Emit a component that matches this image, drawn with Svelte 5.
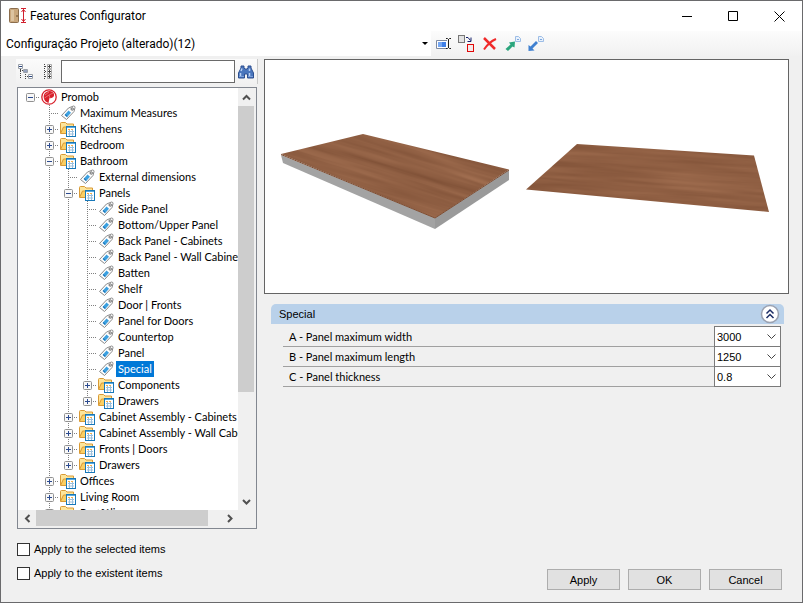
<script lang="ts">
    type TreeNode = {
        name: string;
        open?: boolean;
        children?: TreeNode[];
    };
    type Row = { node: TreeNode; guides: boolean[]; last: boolean };

    let tree: TreeNode = $state({
        name: 'Promob',
        open: true,
        children: [
            { name: 'Maximum Measures' },
            { name: 'Kitchens', children: [] },
            { name: 'Bedroom', children: [] },
            {
                name: 'Bathroom',
                open: true,
                children: [
                    { name: 'External dimensions' },
                    {
                        name: 'Panels',
                        open: true,
                        children: [
                            { name: 'Side Panel' },
                            { name: 'Bottom/Upper Panel' },
                            { name: 'Back Panel - Cabinets' },
                            { name: 'Back Panel - Wall Cabinets' },
                            { name: 'Batten' },
                            { name: 'Shelf' },
                            { name: 'Door | Fronts' },
                            { name: 'Panel for Doors' },
                            { name: 'Countertop' },
                            { name: 'Panel' },
                            { name: 'Special' },
                            { name: 'Components', children: [] },
                            { name: 'Drawers', children: [] },
                        ],
                    },
                    { name: 'Cabinet Assembly - Cabinets', children: [] },
                    { name: 'Cabinet Assembly - Wall Cabinets', children: [] },
                    { name: 'Fronts | Doors', children: [] },
                    { name: 'Drawers', children: [] },
                ],
            },
            { name: 'Offices', children: [] },
            { name: 'Living Room', children: [] },
            { name: 'Portfólio', children: [] },
        ],
    });

    let selected = $state('Special');

    let fields = $state([
        { id: 'width', label: 'A - Panel maximum width', value: '3000' },
        { id: 'length', label: 'B - Panel maximum length', value: '1250' },
        { id: 'thickness', label: 'C - Panel thickness', value: '0.8' },
    ]);

    // guides: for each ancestor, does its line run on past this row
    function flatten(node: TreeNode, guides: boolean[], last: boolean): Row[] {
        const rows: Row[] = [{ node, guides, last }];
        if (node.open && node.children) {
            const kids = node.children;
            kids.forEach((child, i) => {
                rows.push(...flatten(child, [...guides, !last], i === kids.length - 1 && guides.length > 0));
            });
        }
        return rows;
    }

    // the root has no line of its own
    let rows = $derived(flatten(tree, [], true));
</script>

{#snippet tagIcon()}
    <svg class="node-icon" width="18" height="16" viewBox="0 0 18 16">
        <path d="M2.500 10.500 9.500 3l5-2q1.600 0 1.500 1.600L15 6.500 7.500 14.500z" fill="#fdfdfd" stroke="#8a8a8a" />
        <path d="m5.500 10 4-4.500 2.500 2.300-4 4.500z" fill="#3ba0e0" />
        <path d="m6 9.500 2.200 2" stroke="#1763a5" />
        <circle cx="13.200" cy="4" r="1.200" fill="#fff" stroke="#666" />
    </svg>
{/snippet}

{#snippet folderIcon()}
    <svg class="node-icon" width="18" height="16" viewBox="0 0 18 16">
        <path d="M1.500 12V2.500q0-1 1-1h4l1.500 1.500h6.500v3" fill="#fde59b" stroke="#d99a35" />
        <path d="M1.500 12.500 4.500 6H15v6.500z" fill="#fbcf63" stroke="#d99a35" />
        <rect x="7.500" y="5.500" width="9" height="10" fill="#fff" stroke="#1878b9" />
        <path d="M8 6.500h8" stroke="#5aa9dc" />
        <path d="M9 8.500h6" stroke="#f5b04a" stroke-dasharray="2 1" />
        <path d="M9 10.500h6M9 13h6M10.500 9v6M13.500 9v6" stroke="#9cc0dd" />
    </svg>
{/snippet}

{#snippet promobIcon()}
    <svg class="node-icon" width="18" height="16" viewBox="0 0 18 16">
        <circle cx="9" cy="8" r="7.200" fill="#fff" stroke="#d8212c" stroke-width="1.300" />
        <path d="M8.500 14C3.500 12.500 2.500 7 5 4q4-3.500 8-.8 2 2.500.3 4.800-1.600 1.600-3.800 1z" fill="#d8212c" />
        <path d="m5 6 4-3M4.500 9 9 6l4-2M9 6l1 3" stroke="#f08a8f" stroke-width=".7" fill="none" />
    </svg>
{/snippet}

{#snippet chevron(d: string)}
    <svg width="9" height="9" viewBox="0 0 9 9">
        <path {d} fill="none" stroke="#505050" stroke-width="2" />
    </svg>
{/snippet}

<main class="window">
    <header class="title-bar">
        <svg width="18" height="18" viewBox="0 0 18 18">
            <rect x=".5" y="1.500" width="9" height="14" rx="1" fill="#c9a77c" stroke="#8b6d4c" />
            <path d="M2 3h3v11H2z" fill="#dcc3a0" />
            <circle cx="8" cy="9" r=".8" fill="#50391f" />
            <path d="M12 1.500h5M12 15.500h5M14.500 2v13M12.500 5l2-2.500 2 2.500M12.500 12l2 2.500 2-2.500" fill="none" stroke="#d11f2d" />
        </svg>
        <h1>Features Configurator</h1>
        <button class="window-button" aria-label="Minimize">
            <svg width="11" height="11" viewBox="0 0 11 11"><path d="M0 5.500h10" stroke="#000" /></svg>
        </button>
        <button class="window-button" aria-label="Maximize">
            <svg width="11" height="11" viewBox="0 0 11 11"><path d="M.5.5h9v9h-9z" fill="none" stroke="#000" /></svg>
        </button>
        <button class="window-button" aria-label="Close">
            <svg width="11" height="11" viewBox="0 0 11 11"><path d="m.5.5 10 10m0-10-10 10" stroke="#000" /></svg>
        </button>
    </header>

    <div class="toolbar">
        <div class="project">
            <select aria-label="Project">
                <option>Configuração Projeto (alterado)(12)</option>
            </select>
            <span class="arrow"></span>
        </div>
        <button class="tool" aria-label="Rename">
            <svg width="16" height="16" viewBox="0 0 16 16">
                <path d="M11 4.500H.5v8H11" fill="#fff" stroke="#7e8aa0" />
                <path d="M2 6h8v5H2z" fill="#3f80e8" />
                <path d="M2 6h4v5H2z" fill="#75a7f3" />
                <path d="M10 2.500h1.500l1 1 1-1H15M12.500 3v9M10 12.500h1.500l1-1 1 1H15" fill="none" stroke="#222" />
            </svg>
        </button>
        <button class="tool" aria-label="Replace">
            <svg width="17" height="17" viewBox="0 0 17 17">
                <rect x=".5" y=".5" width="6" height="7" fill="#e3e3e3" stroke="#777" />
                <rect x="9.500" y="9.500" width="6" height="7" fill="#f4eaea" stroke="#e00808" />
                <path d="M8 2.500h2l2.500 3M13 2.500v4H9.500" fill="none" stroke="#14206b" />
            </svg>
        </button>
        <button class="tool" aria-label="Delete">
            <svg width="16" height="16" viewBox="0 0 16 16">
                <path d="m2 2 11 11" stroke="#f02a2a" stroke-width="2.500" />
                <path d="M14 3Q7 6 2 13.500" fill="none" stroke="#f02a2a" stroke-width="2" />
            </svg>
        </button>
        <button class="tool" aria-label="Export">
            <svg width="16" height="16" viewBox="0 0 16 16">
                <path d="M.5 13 5.500 8.500 4 6.500l6-1L9.500 11.500 7.500 10.500 3 15z" fill="#2aa57c" />
                <path d="M10.500.5h3l2 2v3h-5z" fill="#e8f1fc" stroke="#9dbde6" />
                <path d="M12 3.500h2" stroke="#7da7dc" />
            </svg>
        </button>
        <button class="tool" aria-label="Import">
            <svg width="16" height="16" viewBox="0 0 16 16">
                <path d="M.5 15V9L2.500 10.500 8 5l2 2-5.500 5.500L6.500 14.500z" fill="#3f80d0" />
                <path d="M10.500.5h3l2 2v3h-5z" fill="#e8f1fc" stroke="#9dbde6" />
                <path d="M12 3.500h2" stroke="#7da7dc" />
            </svg>
        </button>
    </div>

    <div class="content">
        <aside>
            <div class="search">
                <button class="expand-all" aria-label="Expand all">
                    <svg width="15" height="16" viewBox="0 0 15 16">
                        <path d="M2.500 5v10M7.500 10v5M2 6.500h4M7 12.500h3" stroke="#444" stroke-dasharray="1 1" />
                        <path d="M.5.5h4v4h-4zM5.500 5.500h4v3h-4zM10.500 10.500h4v4h-4z" fill="#fff" stroke="#9aa0a8" />
                        <path d="M1 2.500h3M6 7h3M11 12.500h3" stroke="#2a4580" />
                    </svg>
                </button>
                <button class="collapse-all" aria-label="Collapse all">
                    <svg width="10" height="16" viewBox="0 0 10 16">
                        <path d="M1.500 0v16M2 2.500h3M2 7.500h3M2 12.500h3" stroke="#444" stroke-dasharray="1 1" />
                        <path d="M4.500.5h4v4h-4zM4.500 5.500h4v4h-4zM4.500 10.500h4v4h-4z" fill="#fff" stroke="#aaa" />
                        <path d="M5 2.500h3M5 7.500h3M5 12.500h3M6.500 1v3M6.500 6v3M6.500 11v3" stroke="#444" />
                    </svg>
                </button>
                <input type="text" aria-label="Search" />
                <button class="find" aria-label="Find">
                    <svg width="16" height="16" viewBox="0 0 16 16">
                        <path d="M3 2h3v2l1 1h2l1-1V2h3v2l2.500 5v5H9.500v-4h-3v4H.5V9L3 4z" fill="#4a76bd" stroke="#2c4f90" />
                        <path d="M2.500 9v4M4 4.500 3 7M11.500 9v4M11.500 4.500v2.500" stroke="#b9d0f3" stroke-width="1.500" />
                        <path d="M1 12.500h5M10 12.500h5" stroke="#7da1dc" />
                    </svg>
                </button>
            </div>

            <div class="tree-box">
                <ul class="tree">
                    {#each rows as { node, guides, last }, i}
                        <li>
                            {#each guides as line, level}
                                <svg class="guide" width="19" height="16">
                                    {#if line && level > 0}
                                        <path d="M9.500 0v16" stroke="#808080" stroke-dasharray="1 1" />
                                    {/if}
                                </svg>
                            {/each}
                            <span class="joint">
                                <svg class="guide" width="19" height="16">
                                    {#if i > 0}
                                        <path d={last ? 'M9.500 0v9' : 'M9.500 0v16'} stroke="#808080" stroke-dasharray="1 1" />
                                    {/if}
                                    <path d="M9 8.500h10" stroke="#808080" stroke-dasharray="1 1" />
                                </svg>
                                {#if node.children}
                                    <button
                                        class="expander"
                                        aria-label={node.open ? 'Collapse' : 'Expand'}
                                        onclick={() => (node.open = !node.open)}
                                    >
                                        <svg width="9" height="9" viewBox="0 0 9 9">
                                            <rect x=".5" y=".5" width="8" height="8" rx="1" fill="#f8f8f8" stroke="#919191" />
                                            <path d={node.open ? 'M2 4.500h5' : 'M2 4.500h5M4.500 2v5'} stroke="#2b4a8f" />
                                        </svg>
                                    </button>
                                {/if}
                            </span>
                            {#if i === 0}
                                {@render promobIcon()}
                            {:else if node.children}
                                {@render folderIcon()}
                            {:else}
                                {@render tagIcon()}
                            {/if}
                            <button
                                class="node-name"
                                class:selected={node.name === selected}
                                onclick={() => (selected = node.name)}
                            >
                                {node.name}
                            </button>
                        </li>
                    {/each}
                </ul>
                <div class="scroll vertical">
                    <button aria-label="Scroll up">{@render chevron('M1 6.500 4.500 3 8 6.500')}</button>
                    <span class="thumb"></span>
                    <button aria-label="Scroll down">{@render chevron('M1 3 4.500 6.500 8 3')}</button>
                </div>
                <div class="scroll horizontal">
                    <button aria-label="Scroll left">{@render chevron('M6.500 1 3 4.500 6.500 8')}</button>
                    <span class="thumb"></span>
                    <button aria-label="Scroll right">{@render chevron('M3 1 6.500 4.500 3 8')}</button>
                </div>
            </div>

            <label class="check"><input type="checkbox" />Apply to the selected items</label>
            <label class="check"><input type="checkbox" />Apply to the existent items</label>
        </aside>

        <section class="details">
            <div class="preview">
                <svg viewBox="0 0 523 233" role="img" aria-label="Panel preview">
                    <defs>
                        <filter id="grain" x="0" y="0" width="100%" height="100%" color-interpolation-filters="sRGB">
                            <feTurbulence type="fractalNoise" baseFrequency="0.008 0.16" numOctaves="3" seed="4" />
                            <feColorMatrix values="0.16 0 0 0 0.48  0.14 0 0 0 0.3  0.12 0 0 0 0.2  0 0 0 0 1" />
                        </filter>
                        <clipPath id="board"><path d="M16 94 98 74l146 35.500L170 158z" /></clipPath>
                        <clipPath id="sheet"><path d="M261 129.500 312 84l177 11.500L504 152z" /></clipPath>
                    </defs>
                    <path d="M16 95 170 158v11L18 103z" fill="#a3a3a3" />
                    <path d="M170 158 244 110v10l-74 49z" fill="#9a9a9a" />
                    <g clip-path="url(#board)">
                        <rect x="-20" y="-20" width="320" height="260" filter="url(#grain)" transform="rotate(17 130 110)" />
                    </g>
                    <path d="M16 94.500 170 158 244 110" fill="none" stroke="#7d4c31" />
                    <g clip-path="url(#sheet)">
                        <rect x="240" y="40" width="290" height="150" filter="url(#grain)" transform="rotate(4 380 115)" />
                    </g>
                </svg>
            </div>

            <div class="group">
                <h2>
                    Special
                    <button aria-label="Collapse group">
                        <svg width="20" height="20" viewBox="0 0 20 20">
                            <circle cx="10" cy="10" r="8.500" fill="#fff" stroke="#9aa1b0" stroke-width="1.500" />
                            <path d="m6.500 9.500 3.500-3.500 3.500 3.500M6.500 14l3.500-3.500 3.500 3.500" fill="none" stroke="#1c2d66" stroke-width="1.500" />
                        </svg>
                    </button>
                </h2>
                {#each fields as field}
                    <div class="field">
                        <label for={field.id}>{field.label}</label>
                        <div class="combo">
                            <select id={field.id} bind:value={field.value}>
                                <option>{field.value}</option>
                            </select>
                            <svg width="9" height="6" viewBox="0 0 9 6">
                                <path d="m.5.500 4 4 4-4" fill="none" stroke="#444" />
                            </svg>
                        </div>
                    </div>
                {/each}
            </div>

            <footer>
                <button>Apply</button>
                <button>OK</button>
                <button>Cancel</button>
            </footer>
        </section>
    </div>
</main>

<style>
    :global(body) {
        background: #fff;
    }

    * {
        box-sizing: border-box;
    }

    button,
    select,
    input {
        font: inherit;
        color: inherit;
    }

    button {
        display: flex;
        align-items: center;
        justify-content: center;
        padding: 0;
        border: none;
        background: none;
    }

    svg {
        display: block;
        flex: none;
    }

    select {
        appearance: none;
        border: none;
        border-radius: 0;
        background: #fff;
    }

    .window {
        display: flex;
        flex-direction: column;
        height: calc(100vh - 10px);
        margin-right: 6px;
        border: 1px solid #6a6a6c;
        background: #f0f0f0;
        color: #000;
        font: 11px/16px "Liberation Sans", Arial, sans-serif;
    }

    .title-bar {
        display: flex;
        align-items: center;
        height: 30px;
        padding-left: 8px;
        background: #fff;
    }

    h1 {
        flex: 1;
        margin: 0 0 0 3px;
        font: 12px/16px Roboto, sans-serif;
    }

    .window-button {
        width: 46px;
        height: 30px;
    }

    .toolbar {
        display: flex;
        height: 25px;
        background: linear-gradient(#fcfcfc, #f1f1f1);
    }

    .project {
        display: grid;
        grid-template-columns: 1fr 12px;
        align-items: center;
        flex: 0 1 430px;
        margin-right: 1px;
        background: #fff;
        font: 12px/16px Roboto, sans-serif;
    }

    .project select {
        height: 23px;
        padding: 0 5px;
    }

    .arrow {
        height: 0;
        margin: 0 3px;
        border: 3px solid transparent;
        border-top-color: #000;
        border-bottom: none;
    }

    .tool {
        width: 23px;
    }

    .content {
        display: grid;
        grid-template-columns: 242px 1fr;
        flex: 1;
        gap: 6px;
        min-height: 0;
        padding: 3px 13px 12px 15px;
    }

    aside {
        display: flex;
        flex-direction: column;
        min-height: 0;
    }

    .search {
        display: flex;
        align-items: center;
        height: 25px;
        border-right: 1px solid #c8c8c8;
        background: linear-gradient(#fbfbfb, #f1f1f1);
    }

    .search button {
        height: 24px;
    }

    .expand-all {
        width: 18px;
    }

    .collapse-all {
        width: 27px;
    }

    .find {
        width: 22px;
    }

    .search input {
        flex: 1;
        min-width: 0;
        height: 23px;
        padding: 0 4px;
        border: 1px solid #6a6a6a;
        background: #fff;
    }

    .tree-box {
        display: grid;
        grid-template: minmax(0, 1fr) 18px / minmax(0, 1fr) 18px;
        flex: 1;
        min-height: 0;
        margin: 3px 1px 8px;
        border: 1px solid #828790;
        background: #fff;
    }

    .tree {
        overflow: hidden;
        margin: 0;
        padding: 1px 0 0 3px;
        list-style: none;
    }

    li {
        display: flex;
        height: 16px;
    }

    .guide {
        fill: none;
    }

    .joint {
        display: grid;
        flex: none;
    }

    .joint > * {
        grid-area: 1 / 1;
    }

    .expander {
        place-self: center;
    }

    .node-name {
        flex: none;
        margin-left: 1px;
        padding: 0 2px;
        font: 11px/16px Lato, sans-serif;
        white-space: nowrap;
    }

    .selected {
        background: #0078d7;
        color: #fff;
    }

    .scroll {
        display: flex;
        background: #f0f0f0;
    }

    .scroll button {
        flex: none;
        width: 17px;
        height: 17px;
    }

    .thumb {
        background: #cdcdcd;
    }

    .vertical {
        flex-direction: column;
        justify-content: space-between;
        padding: 1px 2px 0 0;
    }

    .vertical .thumb {
        flex: 0 0 68%;
        margin-bottom: auto;
    }

    .horizontal {
        grid-column: 1 / 3;
        padding: 0 18px 2px 1px;
    }

    .horizontal .thumb {
        flex: 0 1 172px;
        margin-right: auto;
    }

    .check {
        display: flex;
        align-items: center;
        gap: 4px;
        height: 24px;
        margin-left: 1px;
    }

    .check:last-child {
        margin-bottom: 5px;
    }

    .check input {
        appearance: none;
        width: 13px;
        height: 13px;
        margin: 0;
        border: 1px solid #333;
        background: #fff;
    }

    .check input:checked {
        background: #0078d7;
    }

    .details {
        display: flex;
        flex-direction: column;
        min-width: 0;
    }

    .preview {
        border: 1px solid #646464;
        background: #fff;
    }

    .preview svg {
        width: 100%;
        height: auto;
    }

    .group {
        margin: 10px 5px 0 7px;
    }

    h2 {
        display: flex;
        align-items: center;
        justify-content: space-between;
        height: 20px;
        margin: 0;
        padding: 0 4px 0 8px;
        border-radius: 5px 5px 0 0;
        background: #b9d1ea;
        font: inherit;
    }

    .field {
        display: flex;
        height: 20px;
        margin: 0 3px 0 12px;
        border-bottom: 1px solid #a0a0a0;
    }

    h2 + .field {
        margin-top: 3px;
    }

    .field label {
        flex: 1;
        padding-left: 6px;
        font: 11px/20px Lato, sans-serif;
    }

    .combo {
        display: grid;
        align-items: center;
        width: 67px;
        height: 21px;
        margin-top: -1px;
        border: 1px solid #7a7a7a;
        background: #fff;
    }

    .combo > * {
        grid-area: 1 / 1;
    }

    .combo select {
        height: 18px;
        padding: 0 2px;
    }

    .combo svg {
        justify-self: end;
        margin-right: 4px;
        pointer-events: none;
    }

    footer {
        display: flex;
        justify-content: flex-end;
        gap: 8px;
        margin-top: auto;
        padding-right: 7px;
    }

    footer button {
        width: 73px;
        height: 21px;
        border: 1px solid #adadad;
        background: #e1e1e1;
    }
</style>
